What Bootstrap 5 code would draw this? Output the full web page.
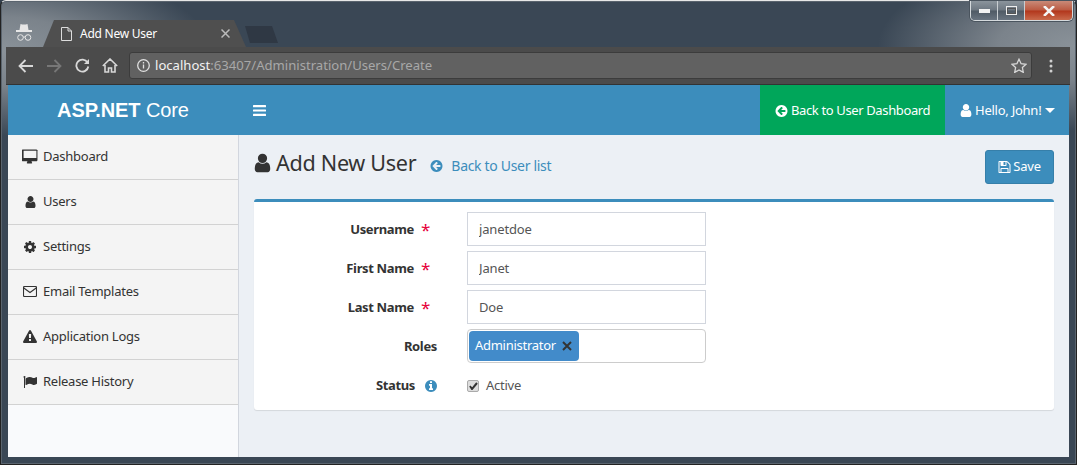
<!DOCTYPE html>
<html lang="en">
<head>
<meta charset="utf-8">
<title>Add New User</title>
<link rel="stylesheet" href="https://cdn.jsdelivr.net/npm/bootstrap@5.3.0/dist/css/bootstrap.min.css">
<style>
html,body{height:465px;overflow:hidden}
body{font-family:"Noto Sans","Open Sans",sans-serif;font-size:13px;color:#333;background:#333f4c;letter-spacing:-.25px}
.ico{display:inline-block;fill:currentColor;flex:none}
.flex-none{flex:none}
.info-i{color:#3c8dbc;margin-left:3px}
.desk{height:465px;position:relative;padding:46px 6px 0 5px;background:radial-gradient(ellipse 210px 85px at 0 50px,#8a9299 0,#7b838b 40%,rgba(60,74,88,0) 100%),radial-gradient(ellipse 200px 85px at 1077px 45px,#8a9299 0,#7b838b 40%,rgba(60,74,88,0) 100%),#3a4755;border:1px solid #222;border-top-color:#e8e8e8;border-radius:6px 6px 0 0;box-shadow:inset 0 0 0 1px #5a646e}
.tabstrip{position:absolute;left:42px;top:19px;width:203px;height:27px;display:flex;align-items:center;gap:8px;padding:0 16px 0 18px;background:#4f4f4f;color:#fff;font-size:12px;white-space:nowrap;clip-path:polygon(0 100%,11px 0,191px 0,203px 100%)}
.newtab{position:absolute;left:244px;top:25px;width:33px;height:17px;background:#2f3844;clip-path:polygon(0 0,27px 0,33px 100%,5px 100%)}
.incog{position:absolute;left:15px;top:22px;color:#e6e6e6}
.winbtns{position:absolute;right:3px;top:0;width:103px;height:20px;display:flex;border:1px solid #d5dadd;border-top:0;border-radius:0 0 5px 5px;overflow:hidden;box-shadow:0 0 0 1px #4a545e}
.winbtn{display:flex;align-items:center;justify-content:center;width:27px;background:linear-gradient(#8b949c 0,#6d7781 48%,#4f5a65 52%,#697480 100%);border-right:1px solid #c9ced2}
.winbtn.cl{flex:1;border:0;background:linear-gradient(#c98a78 0,#bb5a42 48%,#b2361c 52%,#c96a4c 100%)}
.toolbar{height:38px;background:#4b4b4b;display:flex;align-items:center;padding:0 8px 0 6px;border-bottom:1px solid #333;color:#d8d8d8}
.tbtn{width:28px;display:flex;justify-content:center;flex:none}
.tbtn.menu{width:22px}
.omni{flex:1;margin-left:5px;height:27px;background:#616161;border:1px solid #3c3c3c;border-radius:3px;display:flex;align-items:center;padding:0 0 0 7px;font-size:13.1px;color:#a8a8a8;letter-spacing:0;margin-right:8px}
.omni b{font-weight:400;color:#f2f2f2}
.omni-url{margin-left:5px}
.page{width:1061px;margin-left:2px;height:372px;display:flex;flex-direction:column;background:#ecf0f5}
.topbar{height:50px;flex:none;background:#3c8dbc;color:#fff;padding:0;align-items:stretch;flex-wrap:nowrap}
.brandbox{width:230px;text-align:center;font:20px/50px "Liberation Sans",sans-serif;color:#fff;letter-spacing:-.1px}
.brandbox b{font-weight:700}
.burger{display:flex;align-items:center;padding:0 15px}
.topact{display:flex;align-items:center;padding:1px 15px 0;gap:3px;color:#fff;text-decoration:none;white-space:nowrap}
.topact.green{background:#00a65a;width:185px;letter-spacing:-.37px}
.topact.hello{width:124px}
.caret-d{width:0;height:0;border:5px solid transparent;border-top-color:#fff;border-bottom:0;margin-left:1px}
.shell{flex:1;display:flex;min-height:0}
.sidenav{width:231px;flex:none;background:#f9fafc;border-right:1px solid #d2d6de}
.sidenav .list-group-item{height:45px;display:flex;align-items:center;background:#f4f4f4;border-color:#d2d2d2;color:#333;padding:0 0 1px 14px;font-size:13px;gap:5px}
.sidenav .list-group-item:last-child{border-bottom:1px solid #d2d2d2}
.sidenav .iconwrap{width:16px;display:flex;justify-content:center}
.mainarea{flex:1;padding:0 15px;min-width:0}
.pagehead{height:64px;display:flex;align-items:flex-start}
.pagehead h1{font-size:21.6px;font-weight:400;margin:14px 0 0;color:#333;display:flex;align-items:center;gap:5px;line-height:28px;letter-spacing:-.3px}
.backlink{color:#3c8dbc;text-decoration:none;margin:20px 0 0 14px;display:flex;align-items:center;gap:8px;font-size:14px;letter-spacing:-.32px}
.savebtn{margin:15px 0 0 auto;width:69px;height:34px;background:#3c8dbc;border:1px solid #367fa9;border-radius:3px;color:#fff;font-size:13px;padding:0;display:flex;align-items:center;justify-content:center;gap:2px;letter-spacing:-.2px}
.savebtn:hover{background:#367fa9;color:#fff}
.formcard{border:0;border-top:3px solid #3c8dbc;border-radius:3px;height:211px;padding:10px 0 0;box-shadow:0 1px 1px rgba(0,0,0,.1)}
.frow{display:flex;height:34px;margin-bottom:5px;align-items:center}
.flabel{width:183px;text-align:right;font-weight:700;color:#333;margin:0;padding-top:1px;display:flex;justify-content:flex-end;align-items:center;gap:7px;letter-spacing:-.35px}
.req{color:#e6003a;font-weight:400;font-size:17px;line-height:14px;width:16px;text-align:left;height:14px}
.fctl{margin-left:30px;width:239px}
.fctl .form-control{height:34px;border:1px solid #d2d6de;border-radius:0;font-size:13px;padding:0 11px;color:#555;letter-spacing:-.15px;box-shadow:none}
.tagbox{height:34px;border:1px solid #ccc;border-radius:4px;padding:1px;display:flex;align-items:center;background:#fff}
.tagchip{height:30px;width:110px;background:#428bca;border-radius:4px;color:#fff;display:flex;align-items:center;padding:0 6px;gap:6px;letter-spacing:-.28px;white-space:nowrap}
.statusrow{height:34px;margin-bottom:0}
.activecheck{display:flex;align-items:center;gap:7px;margin:0;padding-top:1px;color:#555}
.activecheck .form-check-input{width:12px;height:12px;margin:0;border-radius:2px;border:1px solid #aaa;background-color:#ddd;--bs-form-check-bg-image:none}
.chkwrap{position:relative;display:flex}
.chkwrap svg{position:absolute;left:2px;top:2px}
</style>
</head>
<body>
<svg width="0" height="0" class="d-none">
<defs>
<symbol id="i-user" viewBox="0 0 1408 1792"><path transform="translate(-192 0)" d="M1536 1399q0 109-62.5 187t-150.5 78h-854q-88 0-150.5-78t-62.5-187q0-85 8.5-160.5t31.5-152 58.5-131 94-89 134.5-34.5q131 128 313 128t313-128q76 0 134.5 34.5t94 89 58.5 131 31.5 152 8.5 160.5zm-256-887q0 159-112.5 271.5t-271.5 112.5-271.5-112.5-112.5-271.5 112.5-271.5 271.5-112.5 271.5 112.5 112.5 271.5z"/></symbol>
<symbol id="i-back" viewBox="0 0 1536 1792"><path transform="translate(-128 0)" d="M1408 960v-128q0-26-19-45t-45-19h-502l189-189q19-19 19-45t-19-45l-91-91q-18-18-45-18t-45 18l-362 362-91 91q-18 18-18 45t18 45l91 91 362 362q18 18 45 18t45-18l91-91q18-18 18-45t-18-45l-189-189h502q26 0 45-19t19-45zm256-64q0 209-103 385.5t-279.5 279.5-385.5 103-385.5-103-279.5-279.5-103-385.5 103-385.5 279.5-279.5 385.5-103 385.5 103 279.5 279.5 103 385.5z"/></symbol>
<symbol id="i-cog" viewBox="0 0 1536 1792"><path transform="translate(-128 0)" d="M1152 896q0-106-75-181t-181-75-181 75-75 181 75 181 181 75 181-75 75-181zm512-109v222q0 12-8 23t-20 13l-185 28q-19 54-39 91 35 50 107 138 10 12 10 25t-9 23q-27 37-99 108t-94 71q-12 0-26-9l-138-108q-44 23-91 38-16 136-29 186-7 28-36 28h-222q-14 0-24.5-8.5t-11.5-21.5l-28-184q-49-16-90-37l-141 107q-10 9-25 9-14 0-25-11-126-114-165-168-7-10-7-23 0-12 8-23 15-21 51-66.5t54-70.5q-27-50-41-99l-183-27q-13-2-21-12.5t-8-23.5v-222q0-12 8-23t19-13l186-28q14-46 39-92-40-57-107-138-10-12-10-24 0-10 9-23 26-36 98.5-107.5t94.5-71.5q13 0 26 10l138 107q44-23 91-38 16-136 29-186 7-28 36-28h222q14 0 24.5 8.5t11.5 21.5l28 184q49 16 90 37l142-107q9-9 24-9 13 0 25 10 129 119 165 170 7 8 7 22 0 12-8 23-15 21-51 66.5t-54 70.5q26 50 41 98l183 28q13 2 21 12.5t8 23.5z"/></symbol>
<symbol id="i-warn" viewBox="0 0 1792 1792"><path d="M1024 1375v-190q0-14-9.5-23.5t-22.5-9.5h-192q-13 0-22.5 9.5t-9.5 23.5v190q0 14 9.5 23.5t22.5 9.5h192q13 0 22.5-9.5t9.5-23.5zm-2-374l18-459q0-12-10-19-13-11-24-11h-220q-11 0-24 11-10 7-10 21l17 457q0 10 10 16.5t24 6.5h185q14 0 23.5-6.5t10.5-16.5zm-14-934l768 1408q35 63-2 126-17 29-46.5 46t-63.5 17h-1536q-34 0-63.5-17t-46.5-46q-37-63-2-126l768-1408q17-31 47-49t65-18 65 18 47 49z"/></symbol>
<symbol id="i-flag" viewBox="0 0 1792 1792"><path d="M320 256q0 72-64 110v1266q0 13-9.5 22.5t-22.5 9.5h-64q-13 0-22.5-9.5t-9.5-22.5v-1266q-64-38-64-110 0-53 37.5-90.5t90.5-37.5 90.5 37.5 37.5 90.5zm1472 64v763q0 25-12.5 38.5t-39.5 27.5q-215 116-369 116-61 0-123.5-22t-108.5-48-115.5-48-142.5-22q-192 0-464 146-17 9-33 9-26 0-45-19t-19-45v-742q0-32 31-55 21-14 79-43 236-120 421-120 107 0 200 29t219 88q38 19 88 19 54 0 117.5-21t110-47 88-47 54.5-21q26 0 45 19t19 45z"/></symbol>
<symbol id="i-desk" viewBox="0 0 1920 1792"><path transform="translate(64 0)" d="M1664 1056v-832q0-13-9.5-22.5t-22.5-9.5h-1472q-13 0-22.5 9.5t-9.5 22.5v832q0 13 9.5 22.5t22.5 9.5h1472q13 0 22.5-9.5t9.5-22.5zm128-832v1088q0 66-47 113t-113 47h-544q0 37 16 77.5t32 71 16 43.5q0 26-19 45t-45 19h-512q-26 0-45-19t-19-45q0-14 16-44t32-70 16-78h-544q-66 0-113-47t-47-113v-1088q0-66 47-113t113-47h1632q66 0 113 47t47 113z"/></symbol>
<symbol id="i-save" viewBox="0 0 1536 1792"><path d="M384 1536h768v-384h-768v384zm896 0h128v-896q0-14-10-38.500t-20-34.500l-281-281q-10-10-34-20t-39-10v416q0 40-28 68t-68 28h-576q-40 0-68-28t-28-68v-416h-128v1280h128v-416q0-40 28-68t68-28h832q40 0 68 28t28 68v416zm-384-928v-320q0-13-9.500-22.500t-22.500-9.500h-192q-13 0-22.500 9.500t-9.500 22.500v320q0 13 9.500 22.500t22.500 9.500h192q13 0 22.500-9.500t9.500-22.500zm640 32v928q0 40-28 68t-68 28h-1344q-40 0-68-28t-28-68v-1344q0-40 28-68t68-28h928q40 0 88 20t76 48l280 280q28 28 48 76t20 88z"/></symbol>
<symbol id="i-info" viewBox="0 0 1536 1792"><path transform="translate(-128 0)" d="M1152 1376v-160q0-14-9-23t-23-9h-96v-512q0-14-9-23t-23-9h-320q-14 0-23 9t-9 23v160q0 14 9 23t23 9h96v320h-96q-14 0-23 9t-9 23v160q0 14 9 23t23 9h448q14 0 23-9t9-23zm-128-896v-160q0-14-9-23t-23-9h-192q-14 0-23 9t-9 23v160q0 14 9 23t23 9h192q14 0 23-9t9-23zm640 416q0 209-103 385.5t-279.5 279.5-385.5 103-385.5-103-279.5-279.5-103-385.5 103-385.5 279.5-279.5 385.5-103 385.5 103 279.5 279.5 103 385.5z"/></symbol>
</defs>
</svg>
<div class="desk">
  <svg class="incog" width="17" height="18" viewBox="0 0 17 18" fill="none" stroke="currentColor"><path d="M0 8h16" stroke-width="2"/><path d="M3.500 7 4.500 1q3.500 1 7 0l1 6z" fill="currentColor" stroke="none"/><circle cx="4.500" cy="14.500" r="2.800"/><circle cx="12" cy="14.500" r="2.800"/><path d="M7.300 14h1.900"/></svg>
  <div class="tabstrip">
    <svg width="11" height="14" viewBox="0 0 11 14" fill="none" stroke="#ddd"><path d="M.5.500h6.500l3.500 3.500v9.500h-10zM7 .5v3.500h3.500"/></svg>
    <span class="flex-grow-1">Add New User</span>
    <svg width="9" height="9" viewBox="0 0 9 9" stroke="#bbb" stroke-width="1.500"><path d="M.5.500l8 8M8.500.500l-8 8"/></svg>
  </div>
  <div class="newtab"></div>
  <div class="winbtns">
    <div class="winbtn"><svg width="11" height="4"><rect width="11" height="4" fill="#f2f2f2"/></svg></div>
    <div class="winbtn"><svg width="11" height="9" fill="none"><rect x=".5" y=".5" width="10" height="8" stroke="#eee"/><rect x="1.500" y="2.500" width="8" height="5" stroke="#555"/></svg></div>
    <div class="winbtn cl"><svg width="12" height="10" stroke="#f4f4f4" stroke-width="2.500"><path d="M1 0l10 10M11 0 1 10"/></svg></div>
  </div>
  <div class="toolbar">
    <div class="tbtn"><svg width="16" height="14" viewBox="0 0 16 14" fill="none" stroke="#d8d8d8" stroke-width="1.800"><path d="M15 7H2M7.500 1 1.500 7l6 6"/></svg></div>
    <div class="tbtn"><svg width="16" height="14" viewBox="0 0 16 14" fill="none" stroke="#777" stroke-width="1.800"><path d="M1 7h13M8.500 1l6 6-6 6"/></svg></div>
    <div class="tbtn"><svg width="15" height="15" viewBox="0 0 15 15" fill="none" stroke="#d8d8d8" stroke-width="1.800"><path d="M12.500 4.500a6 6 0 1 0 .8 4"/><path d="M14 1v5h-5z" fill="#d8d8d8" stroke="none"/></svg></div>
    <div class="tbtn"><svg width="16" height="15" viewBox="0 0 16 15" fill="none" stroke="#d8d8d8" stroke-width="1.600"><path d="M.8 8 8 1l7.200 7M3 7v7h3.500v-4h3v4H13V7"/></svg></div>
    <div class="omni">
      <svg class="flex-none" width="13" height="13" viewBox="0 0 13 13" fill="none" stroke="#e0e0e0" stroke-width="1.300"><circle cx="6.500" cy="6.500" r="5.800"/><path d="M6.500 5.500v4M6.500 3v1.500"/></svg>
      <span class="omni-url"><b>localhost</b>:63407/Administration/Users/Create</span>
      <svg class="ms-auto me-1" width="16" height="15" viewBox="0 0 16 15" fill="none" stroke="#d8d8d8" stroke-width="1.300"><path d="M8 1.200l2.100 4.500 4.900.6-3.600 3.300.9 4.800L8 12l-4.300 2.400.9-4.800L1 6.300l4.900-.6z"/></svg>
    </div>
    <div class="tbtn menu"><svg width="4" height="14" fill="#d0d0d0"><circle cx="2" cy="2" r="1.500"/><circle cx="2" cy="7" r="1.500"/><circle cx="2" cy="12" r="1.500"/></svg></div>
  </div>
  <div class="page">
    <nav class="navbar topbar">
      <div class="brandbox"><b>ASP.NET</b> Core</div>
      <div class="burger"><svg width="13" height="11" fill="#fff"><rect width="13" height="2.200" rx=".5"/><rect y="4.400" width="13" height="2.200" rx=".5"/><rect y="8.800" width="13" height="2.200" rx=".5"/></svg></div>
      <div class="d-flex ms-auto align-items-stretch h-100">
        <a class="topact green" href="#"><svg class="ico" width="13" height="14"><use href="#i-back"/></svg>Back to User Dashboard</a>
        <a class="topact hello" href="#"><svg class="ico" width="12" height="15"><use href="#i-user"/></svg>Hello, John!<span class="caret-d"></span></a>
      </div>
    </nav>
    <div class="shell">
      <aside class="sidenav">
        <div class="list-group list-group-flush">
          <a class="list-group-item" href="#"><span class="iconwrap"><svg class="ico" width="16" height="15"><use href="#i-desk"/></svg></span>Dashboard</a>
          <a class="list-group-item" href="#"><span class="iconwrap"><svg class="ico" width="11" height="14"><use href="#i-user"/></svg></span>Users</a>
          <a class="list-group-item" href="#"><span class="iconwrap"><svg class="ico" width="12" height="14"><use href="#i-cog"/></svg></span>Settings</a>
          <a class="list-group-item" href="#"><span class="iconwrap"><svg width="14" height="11" fill="none" stroke="currentColor" stroke-width="1.100"><rect x=".5" y=".5" width="13" height="10" rx="1"/><path d="M.8 2l6.200 4.500L13.200 2"/></svg></span>Email Templates</a>
          <a class="list-group-item" href="#"><span class="iconwrap"><svg class="ico" width="14" height="14"><use href="#i-warn"/></svg></span>Application Logs</a>
          <a class="list-group-item" href="#"><span class="iconwrap"><svg class="ico" width="14" height="14"><use href="#i-flag"/></svg></span>Release History</a>
        </div>
      </aside>
      <main class="mainarea">
        <div class="pagehead">
          <h1><svg class="ico" width="17" height="22"><use href="#i-user"/></svg>Add New User</h1>
          <a class="backlink" href="#"><svg class="ico" width="13" height="14"><use href="#i-back"/></svg>Back to User list</a>
          <button class="btn savebtn" type="button"><svg class="ico" width="13" height="14"><use href="#i-save"/></svg>Save</button>
        </div>
        <form class="card formcard">
          <div class="frow"><label class="flabel">Username<span class="req">*</span></label><div class="fctl"><input class="form-control" value="janetdoe"></div></div>
          <div class="frow"><label class="flabel">First Name<span class="req">*</span></label><div class="fctl"><input class="form-control" value="Janet"></div></div>
          <div class="frow"><label class="flabel">Last Name<span class="req">*</span></label><div class="fctl"><input class="form-control" value="Doe"></div></div>
          <div class="frow"><label class="flabel">Roles</label><div class="fctl"><div class="tagbox"><span class="tagchip">Administrator<svg width="10" height="10" stroke="#333" stroke-width="2"><path d="M1 1l8 8M9 1l-8 8"/></svg></span></div></div></div>
          <div class="frow statusrow"><label class="flabel">Status<svg class="ico info-i" width="12" height="14"><use href="#i-info"/></svg></label><div class="fctl"><label class="activecheck"><span class="chkwrap"><input class="form-check-input" type="checkbox" checked><svg width="9" height="8" fill="none" stroke="#333" stroke-width="2"><path d="M1 4l2 3 5-6"/></svg></span>Active</label></div></div>
        </form>
      </main>
    </div>
  </div>
</div>
<script src="https://cdn.jsdelivr.net/npm/bootstrap@5.3.0/dist/js/bootstrap.bundle.min.js"></script>
</body>
</html>
